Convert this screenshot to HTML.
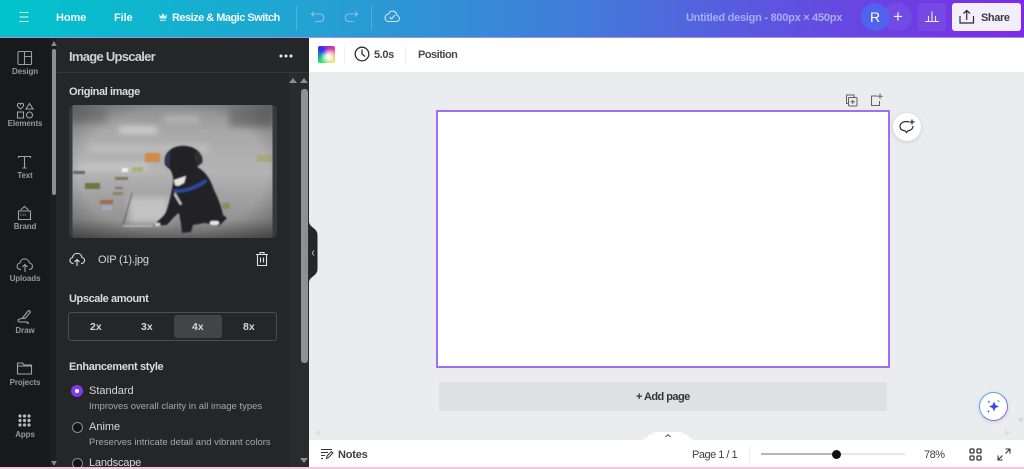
<!DOCTYPE html>
<html><head><meta charset="utf-8">
<style>
html,body{margin:0;padding:0;width:1024px;height:469px;overflow:hidden;background:#fff}
body{font-family:"Liberation Sans",sans-serif;position:relative;filter:blur(.25px)}
.a{position:absolute}
.t{position:absolute;white-space:nowrap;line-height:1}
svg{position:absolute;overflow:visible}
.nav{color:#f4f8fb;font-size:11px;font-weight:700;top:12.500px;letter-spacing:-.1px}
.rl{position:absolute;left:0;width:50px;text-align:center;color:#97989a;font-size:8px;font-weight:700;line-height:1;letter-spacing:-.1px}
.pn{color:#dcdcdd;font-size:11px;font-weight:700;letter-spacing:-.4px}
.sub{color:#a6a7a9;font-size:9.500px}
.opt{color:#d6d6d7;font-size:11px}
.seg{color:#d5d5d6;font-size:10.500px;font-weight:700;top:322px}
.radio{position:absolute;left:72px;width:9px;height:9px;border:1px solid #8a8b8d;border-radius:50%;background:#141517}
.tri{position:absolute;width:0;height:0;border-left:4px solid transparent;border-right:4px solid transparent}
</style></head><body>

<!-- top bar -->
<div class="a" style="left:0;top:0;width:1024px;height:37px;background:linear-gradient(90deg,#00c4cc 0%,#22a3d2 30%,#3f7fd9 55%,#5d55df 75%,#7d2ae8 100%)"></div>
<div class="a" style="left:0;top:37px;width:1024px;height:1px;background:#a98bec"></div>
<svg style="left:18px;top:11px" width="12" height="12"><path d="M1.500 1.500H10.500M1.500 6H10.500M1.500 10.500H10.500" stroke="#e6fbfb" stroke-width="1.100" fill="none"/></svg>
<div class="t nav" style="left:56px">Home</div>
<div class="t nav" style="left:114px">File</div>
<svg style="left:158px;top:12px" width="10" height="10"><path d="M1 2L3 4.500L5 1L7 4.500L9 2L8.300 6.500H1.700ZM2 7.700H8V8.700H2Z" fill="#d9f2f7"/></svg>
<div class="t nav" style="left:172px;letter-spacing:-.52px">Resize &amp; Magic Switch</div>
<div class="a" style="left:296px;top:6px;width:1px;height:24px;background:rgba(255,255,255,.2)"></div>
<svg style="left:310px;top:10px" width="16" height="14" fill="none" stroke="#8dc0e6" stroke-width="1.100"><path d="M4 1.500L1.500 4L4 6.500M1.500 4H10C15 4 15 11.500 10 11.500H5"/></svg>
<svg style="left:343px;top:10px" width="16" height="14" fill="none" stroke="#8dbde6" stroke-width="1.100"><path d="M12 1.500L14.500 4L12 6.500M14.500 4H6C1 4 1 11.500 6 11.500H11"/></svg>
<div class="a" style="left:371px;top:6px;width:1px;height:24px;background:rgba(255,255,255,.2)"></div>
<svg style="left:384px;top:9px" width="17" height="15" fill="none" stroke="#d8e6f6" stroke-width="1.100"><path d="M4.500 12.500H12.500C16 12.500 16.500 7 13 6.500C12.500 1.500 6 .5 4.500 5C0 5.500 0 12.500 4.500 12.500ZM5.500 8L7.500 10L11 6"/></svg>
<div class="t" style="left:686px;top:12.500px;color:#a7aeef;font-size:11px;font-weight:700;letter-spacing:-.26px">Untitled design - 800px × 450px</div>
<div class="a" style="left:882px;top:3px;width:30px;height:28px;border-radius:50%;background:#714be3"></div>
<div class="t" style="left:893px;top:10px;color:#f2ecff;font-size:17px;line-height:14px;font-weight:400">+</div>
<div class="a" style="left:861px;top:3px;width:28px;height:28px;border-radius:50%;background:#4f63ee"></div>
<div class="t" style="left:870px;top:10px;color:#fff;font-size:14px;font-weight:400">R</div>
<div class="a" style="left:918px;top:3px;width:28px;height:28px;border-radius:3px;background:#7648e4"></div>
<svg style="left:924px;top:9px" width="16" height="15" fill="none" stroke="#eee8fd" stroke-width="1.100"><path d="M1 12.500H15M4.500 12V7M8 12V2.500M11.500 12V7"/></svg>
<div class="a" style="left:952px;top:3px;width:69px;height:28px;border-radius:3px;background:#f3eefc"></div>
<svg style="left:959px;top:9px" width="16" height="16" fill="none" stroke="#2b2b33" stroke-width="1.200"><path d="M1 7V14H14.500V7M7.700 11V1.500M4.500 4.500L7.700 1.500L11 4.500"/></svg>
<div class="t" style="left:981px;top:12.500px;color:#3b3a44;font-size:11px;font-weight:700;letter-spacing:-.4px">Share</div>

<!-- left rail -->
<div class="a" style="left:0;top:38px;width:50px;height:429px;background:#18191b"></div>
<div class="a" style="left:50px;top:38px;width:259px;height:429px;background:#252627"></div>
<div class="a" style="left:50px;top:38px;width:6px;height:429px;background:#1d1e20"></div>
<div class="tri" style="left:50px;top:41px;border-bottom:5px solid #8a8a8b;transform:scaleX(.7)"></div>
<div class="a" style="left:52px;top:49px;width:4px;height:146px;background:#8d8e8f;border-radius:2px"></div>
<div class="tri" style="left:50px;top:461px;border-top:5px solid #8a8a8b;transform:scaleX(.7)"></div>

<svg style="left:17px;top:50px" width="16" height="16" fill="none" stroke="#9b9c9e" stroke-width="1.100"><rect x="1" y="1.500" width="13.500" height="13" rx="1"/><path d="M7.500 1.500V14.500M7.500 6.500H14.500"/></svg>
<div class="rl" style="top:68px">Design</div>
<svg style="left:16px;top:102px" width="18" height="18" fill="none" stroke="#a1a2a4" stroke-width="1.100"><path d="M4.500 7C2 5 1 4 1.500 2.500C2 1 4 1 4.500 2.300C5 1 7 1 7.500 2.500C8 4 7 5 4.500 7ZM13.500 1.500L17 7H10ZM1.500 10H7.500V16H1.500Z"/><circle cx="13.500" cy="13" r="3"/></svg>
<div class="rl" style="top:120px">Elements</div>
<svg style="left:17px;top:155px" width="15" height="15" fill="none" stroke="#a1a2a4" stroke-width="1.100"><path d="M1.500 3V1.500H13.500V3M7.500 1.500V13M5.500 13H9.500"/></svg>
<div class="rl" style="top:172px">Text</div>
<svg style="left:17px;top:205px" width="15" height="16" fill="none" stroke="#a1a2a4" stroke-width="1.100"><path d="M1.500 6H13.500V14.500H1.500ZM3.500 5L7.500 1.500L11.500 5"/></svg>
<div class="t" style="left:20px;top:213px;font-size:4px;color:#a1a2a4">CO.</div>
<div class="rl" style="top:223px">Brand</div>
<svg style="left:16px;top:257px" width="18" height="16" fill="none" stroke="#a1a2a4" stroke-width="1.100"><path d="M5 12.500C0 12.500 0 6.500 4 6C5 .5 12 .5 13.500 6C17.500 6.500 17.500 12.500 13 12.500M9 15V8M6.500 10L9 7.500L11.500 10"/></svg>
<div class="rl" style="top:275px">Uploads</div>
<svg style="left:17px;top:309px" width="15" height="16" fill="none" stroke="#a1a2a4" stroke-width="1.100"><path d="M5.500 9L11 2C12 .8 14 2.500 13 3.700L8 9.500ZM6 9.500C2 9.500 0 11 1.500 12.500C3 14 9 12 11 13.500C11.500 14 11 14.500 10 14.500"/></svg>
<div class="rl" style="top:327px">Draw</div>
<svg style="left:16px;top:361px" width="17" height="15" fill="none" stroke="#a1a2a4" stroke-width="1.100"><path d="M1.500 12.500V2H6.500L8 4H15.500V13H1.500ZM1.500 5H15.500"/></svg>
<div class="rl" style="top:379px">Projects</div>
<svg style="left:18px;top:414px" width="13" height="13" fill="#b9babb"><circle cx="2" cy="2" r="1.600"/><circle cx="6.500" cy="2" r="1.600"/><circle cx="11" cy="2" r="1.600"/><circle cx="2" cy="6.500" r="1.600"/><circle cx="6.500" cy="6.500" r="1.600"/><circle cx="11" cy="6.500" r="1.600"/><circle cx="2" cy="11" r="1.600"/><circle cx="6.500" cy="11" r="1.600"/><circle cx="11" cy="11" r="1.600"/></svg>
<div class="rl" style="top:431px">Apps</div>

<!-- panel -->
<div class="t" style="left:69px;top:49.500px;color:#d0d0d1;font-size:13px;font-weight:700;letter-spacing:-.72px">Image Upscaler</div>
<svg style="left:279px;top:53px" width="14" height="6" fill="#e9e9e9"><circle cx="2" cy="3" r="1.500"/><circle cx="7" cy="3" r="1.500"/><circle cx="12" cy="3" r="1.500"/></svg>
<div class="a" style="left:57px;top:72px;width:252px;height:1px;background:#37383a"></div>
<div class="a" style="left:289px;top:73px;width:20px;height:394px;background:#2a2b2c"></div>
<div class="tri" style="left:289px;top:78px;border-bottom:5px solid #8c8d8e"></div>
<div class="tri" style="left:300px;top:78px;border-bottom:5px solid #8c8d8e"></div>
<div class="a" style="left:301px;top:89px;width:7px;height:274px;background:#8f9091;border-radius:3px"></div>
<div class="tri" style="left:300px;top:458px;border-top:5px solid #8c8d8e"></div>

<div class="t pn" style="left:69px;top:87px">Original image</div>

<!-- photo -->
<svg style="left:69px;top:105px" width="208" height="133" viewBox="0 0 208 133">
<defs>
<filter id="b" x="-5%" y="-5%" width="110%" height="110%"><feGaussianBlur stdDeviation=".8"/></filter>
<filter id="b2" x="-20%" y="-20%" width="140%" height="140%"><feGaussianBlur stdDeviation="3.500"/></filter>
<linearGradient id="g" x1="0" y1="0" x2="0" y2="1"><stop offset="0" stop-color="#8e8e8e"/><stop offset=".2" stop-color="#a8a8a8"/><stop offset=".5" stop-color="#b4b4b4"/><stop offset=".68" stop-color="#a2a2a2"/><stop offset=".86" stop-color="#949494"/><stop offset="1" stop-color="#626262"/></linearGradient>
<radialGradient id="v" cx=".5" cy=".5" r=".72"><stop offset=".65" stop-color="#000" stop-opacity="0"/><stop offset="1" stop-color="#000" stop-opacity=".35"/></radialGradient>
<clipPath id="c"><rect x="3.500" y="0" width="200" height="133" rx="2"/></clipPath>
</defs>
<rect x="0" y="0" width="208" height="133" rx="5" fill="#37383a"/>
<g clip-path="url(#c)">
<rect x="3" y="0" width="201" height="133" fill="url(#g)"/>
<g filter="url(#b2)">
<rect x="50" y="22" width="38" height="6" fill="#d8d8d8"/><rect x="95" y="12" width="35" height="5" fill="#bebebe"/>
<rect x="20" y="40" width="120" height="7" fill="#c0c0c0"/><rect x="10" y="58" width="70" height="8" fill="#c4c4c4"/>
<rect x="3" y="3" width="35" height="14" fill="#858585"/><rect x="160" y="4" width="43" height="18" fill="#7c7c7c"/>
<rect x="60" y="92" width="40" height="26" fill="#c2c2c2"/>
</g>
<g filter="url(#b)">
<path d="M63 88L54 120" stroke="#555" stroke-width=".9" fill="none"/>
<path d="M54 121H84" stroke="#cfcfcf" stroke-width="1"/>
<rect x="76" y="48" width="15" height="9" fill="#d08a4a"/>
<rect x="63" y="62" width="11" height="5" fill="#aeb07e"/>
<rect x="53" y="63" width="6" height="4" fill="#f1f1f1"/>
<rect x="16" y="78" width="15" height="6" fill="#6f7445"/>
<rect x="46" y="72" width="13" height="3" fill="#7c7c60"/>
<rect x="4" y="66" width="12" height="3" fill="#666"/>
<rect x="31" y="95" width="13" height="4" fill="#9e6a50"/>
<rect x="33" y="101" width="10" height="4" fill="#a9a9c5"/>
<rect x="188" y="50" width="15" height="7" fill="#a7a97e"/>
<rect x="153" y="98" width="8" height="6" fill="#8d8d5e"/>
<rect x="44" y="87" width="10" height="3" fill="#85855f"/>
<rect x="46" y="82" width="8" height="2" fill="#777"/>
<!-- dog -->
<path d="M100 46C106 39 122 39 129 46C133 50 133 57 128 62C136 66 141 73 145 85C149 93 153 103 154 110L158 113L150 121L136 118L124 120L122 127L113 128L112 119L110 108C106 110 102 116 98 120L84 121C88 116 95 112 97 107C100 99 102 90 104 78C105 70 102 66 100 63C95 60 94 52 100 46Z" fill="#232425"/>
<path d="M100 46C96 49 95 55 96 60L100 64L102 52ZM127 45C132 47 135 54 133 58L128 62L125 52Z" fill="#2f2f30"/>
<path d="M105 75L117 71L115 78L109 81L106 80Z" fill="#e4e4e4"/>
<path d="M105 84C113 86 126 81 137 74L138 77C128 85 113 89 105 87Z" fill="#2d4a9e"/>
<path d="M106 87L113 99L111 100L105 90Z" fill="#c4c4c4"/>
<rect x="141" y="116" width="9" height="4" rx="2" fill="#e6e6e6"/>
<rect x="86" y="118" width="5" height="3" fill="#d5d5d5"/>
<path d="M100 50C98 53 98 58 100 61" stroke="#2c3f90" stroke-width="1.100" fill="none"/>
</g>
<rect x="3" y="0" width="201" height="133" fill="url(#v)"/>
</g>
</svg>

<svg style="left:69px;top:251px" width="16" height="16" fill="none" stroke="#e3e3e4" stroke-width="1.100"><path d="M4.500 12.500C0 12.500 0 7 3.500 6.500C4.500 1 12 1 13 6.500C16.500 7 16.500 12.500 12 12.500M8 15V8.500M5.500 11L8 8.500L10.500 11"/></svg>
<div class="t" style="left:98px;top:254.500px;color:#d6d7d8;font-size:11px;letter-spacing:-.2px">OIP (1).jpg</div>
<svg style="left:255px;top:251px" width="14" height="16" fill="none" stroke="#e3e3e4" stroke-width="1.100"><path d="M1 3.500H13M5 3V1.500H9V3M2.500 3.500V14.500H11.500V3.500M5.500 6.500V11.500M8.500 6.500V11.500"/></svg>

<div class="t pn" style="left:69px;top:294px">Upscale amount</div>
<div class="a" style="left:68px;top:312px;border:1px solid #4d4e50;border-radius:3px;box-sizing:border-box;width:209px;height:29px"></div>
<div class="a" style="left:174px;top:315px;width:48px;height:23px;background:#434446;border-radius:3px"></div>
<div class="t seg" style="left:90px">2x</div>
<div class="t seg" style="left:141px">3x</div>
<div class="t seg" style="left:192px">4x</div>
<div class="t seg" style="left:243px">8x</div>

<div class="t pn" style="left:69px;top:362px;letter-spacing:-.35px">Enhancement style</div>
<div class="a" style="left:71px;top:385px;width:12px;height:12px;border-radius:50%;background:#7d3bf0"></div>
<div class="a" style="left:75px;top:389px;width:4px;height:4px;border-radius:50%;background:#fff"></div>
<div class="t opt" style="left:89px;top:386px">Standard</div>
<div class="t sub" style="left:89px;top:402px">Improves overall clarity in all image types</div>
<div class="radio" style="top:422px"></div>
<div class="t opt" style="left:89px;top:422px">Anime</div>
<div class="t sub" style="left:89px;top:438px">Preserves intricate detail and vibrant colors</div>
<div class="radio" style="top:458px"></div>
<div class="t opt" style="left:89px;top:458px;letter-spacing:-.2px">Landscape</div>

<!-- canvas area -->
<div class="a" style="left:309px;top:38px;width:715px;height:429px;background:#ebecf0"></div>
<div class="a" style="left:309px;top:38px;width:715px;height:34px;background:#fff"></div>
<div class="a" style="left:318px;top:46px;width:17px;height:17px;border-radius:2px;background:radial-gradient(circle at 62% 62%,#fff 0,rgba(255,255,255,.7) 22%,rgba(255,255,255,0) 55%),conic-gradient(from 315deg at 50% 50%,#2a30f0 0,#e83aa0 25%,#f5e050 50%,#20e070 75%,#2a30f0 100%)"></div>
<div class="a" style="left:344px;top:46px;width:1px;height:18px;background:#eeeef1"></div>
<svg style="left:354px;top:46px" width="17" height="17" fill="none" stroke="#2d2e33" stroke-width="1.300"><circle cx="8" cy="8" r="6.800"/><path d="M8 3.500V8L11 10.500"/></svg>
<div class="t" style="left:374px;top:50px;color:#45464c;font-size:11px;font-weight:700;letter-spacing:-.4px">5.0s</div>
<div class="a" style="left:405px;top:46px;width:1px;height:18px;background:#eeeef1"></div>
<div class="t" style="left:418px;top:50px;color:#4a4a50;font-size:11px;font-weight:700;letter-spacing:-.5px">Position</div>

<svg style="left:845px;top:94px" width="13" height="13" fill="none" stroke="#5f6168" stroke-width="1"><path d="M3 9.500H1.500V1H9V3"/><rect x="3.500" y="3.500" width="8.500" height="8.500" rx="1"/><path d="M7.700 5.700V10M5.500 7.800H10"/></svg>
<svg style="left:870px;top:93px" width="13" height="13" fill="none" stroke="#5f6168" stroke-width="1"><path d="M7 3H1.500V12.500H9.500V8M10 .5V6M7.200 3.200H12.800"/></svg>

<div class="a" style="left:436px;top:110px;width:454px;height:258px;box-sizing:border-box;background:#fff;border:2px solid #9f6ff2"></div>

<div class="a" style="left:893px;top:113px;width:28px;height:28px;border-radius:50%;background:#fff;box-shadow:0 1px 4px rgba(0,0,0,.15)"></div>
<svg style="left:899px;top:119px" width="17" height="16" fill="none" stroke="#2b2c31" stroke-width="1.200"><path d="M10 3C5 1.500 1 4 1 7.500C1 10 3 11.500 6 11.800L7.500 13.500L9 11.800C12 11.300 14 9.500 14 7"/><path d="M13 .5V5.500M10.500 3H15.500"/></svg>

<div class="a" style="left:439px;top:382px;width:448px;height:29px;background:#dfe0e4;border-radius:2px"></div>
<div class="t" style="left:636px;top:391.500px;color:#33343a;font-size:11px;font-weight:700;letter-spacing:-.55px">+ Add page</div>

<div class="a" style="left:979px;top:392px;width:29px;height:29px;box-sizing:border-box;border-radius:50%;background:#fff;border:1px solid #5aa6e6;border-right-color:#8a6ce8;border-bottom-color:#8a6ce8;box-shadow:0 1px 4px rgba(0,0,0,.12)"></div>
<svg style="left:985px;top:398px" width="17" height="17"><path d="M9 3.500L10.500 7L14 8.500L10.500 10L9 13.500L7.500 10L4 8.500L7.500 7Z" fill="#3a4ce0"/><circle cx="3.800" cy="3.800" r="1.100" fill="#35a0de"/><circle cx="13.500" cy="3" r=".9" fill="#35a0de"/><circle cx="3.500" cy="13.500" r=".9" fill="#3a3fc8"/></svg>

<div class="tri" style="left:1018px;top:418px;border-top:5px solid #d5d6da;border-left-width:3px;border-right-width:3px"></div>
<div class="a" style="left:1005px;top:430px;width:0;height:0;border-left:5px solid #dcdde1;border-top:3.500px solid transparent;border-bottom:3.500px solid transparent"></div>
<div class="a" style="left:315px;top:430px;width:0;height:0;border-right:5px solid #dcdde1;border-top:3.500px solid transparent;border-bottom:3.500px solid transparent"></div>

<!-- collapse handle -->
<svg style="left:309px;top:222px" width="9" height="60"><path d="M0 0C1 6 8.500 6 8.500 13V47C8.500 54 1 54 0 60Z" fill="#252627"/><path d="M5 28.500L3.200 31L5 33.500" stroke="#c5c5c5" stroke-width=".9" fill="none"/></svg>

<!-- bottom bar -->
<div class="a" style="left:309px;top:440px;width:715px;height:27px;background:#fff"></div>
<div class="a" style="left:0;top:467px;width:1024px;height:2px;background:#f5c6d8"></div>
<svg style="left:638px;top:431px" width="60" height="10"><path d="M0 9.500C10 9.500 10 1 20 1H40C50 1 50 9.500 60 9.500Z" fill="#fff"/><path d="M27.500 6L30 3.700L32.500 6" stroke="#55565c" stroke-width="1" fill="none"/></svg>

<svg style="left:320px;top:448px" width="14" height="12" fill="none" stroke="#34353b" stroke-width="1"><path d="M1 1.500H12M1 4.500H8M1 7.500H5M1 10.500H3M6.500 10.500L7 8L11.500 3.500L13 5L8.500 9.500Z"/></svg>
<div class="t" style="left:338px;top:449.500px;color:#3f4047;font-size:11px;font-weight:700;letter-spacing:-.2px">Notes</div>
<div class="t" style="left:692px;top:449.500px;color:#3f4047;font-size:11px;letter-spacing:-.5px">Page 1 / 1</div>
<div class="a" style="left:749px;top:446px;width:1px;height:17px;background:#eceded"></div>
<div class="a" style="left:761px;top:453px;width:144px;height:2px;background:#e6e7ea"></div>
<div class="a" style="left:761px;top:453px;width:76px;height:2px;background:#b5b6ba"></div>
<div class="a" style="left:832px;top:450px;width:9px;height:9px;border-radius:50%;background:#0e0f12"></div>
<div class="t" style="left:924px;top:449.500px;color:#3f4047;font-size:11px;letter-spacing:-.5px">78%</div>
<svg style="left:969px;top:448px" width="13" height="13" fill="none" stroke="#34353b" stroke-width="1.300"><rect x="1" y="1" width="4" height="4" rx="1"/><rect x="8" y="1" width="4" height="4" rx="1"/><rect x="1" y="8" width="4" height="4" rx="1"/><rect x="8" y="8" width="4" height="4" rx="1"/></svg>
<svg style="left:997px;top:448px" width="14" height="13" fill="none" stroke="#34353b" stroke-width="1.100"><path d="M8.500 1H13V5.500M13 1L8.500 5.500M1 7.500V12H5.500M1 12L5.500 7.500"/></svg>
</body></html>
